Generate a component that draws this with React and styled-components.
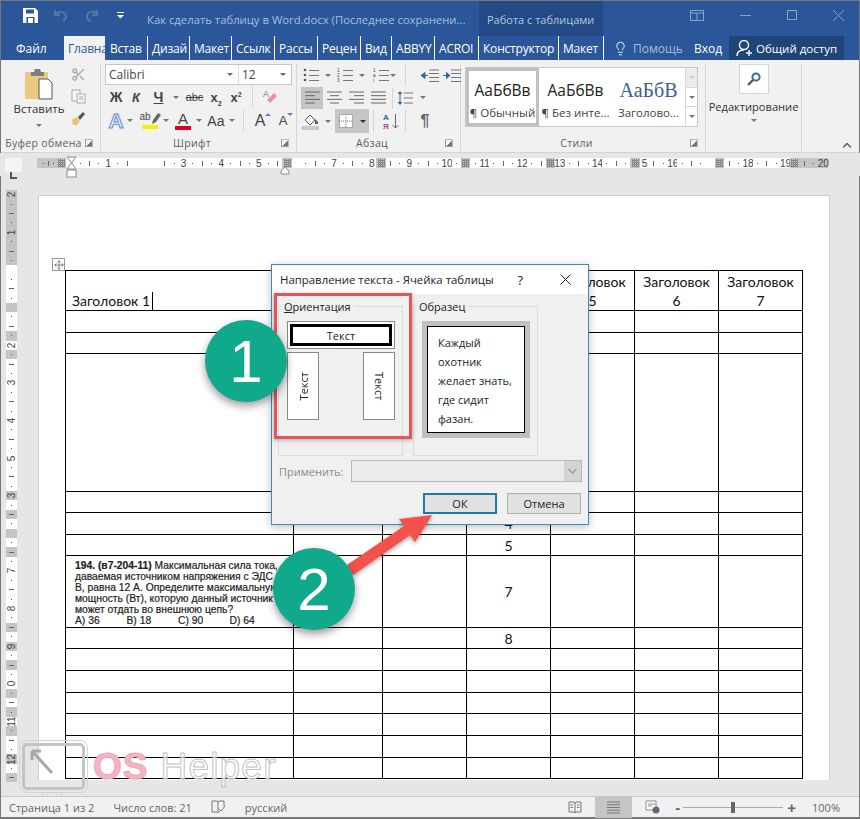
import React from "react";
import styled, { createGlobalStyle } from "styled-components";
import { Move, Scissors, Lightbulb } from "lucide-react";

const UI = `"Open Sans", "Noto Sans", sans-serif`;

const GlobalStyle = createGlobalStyle`
  html, body { margin: 0; padding: 0; background: #e6e6e6; }
  * { box-sizing: border-box; }
`;

const Word = styled.div`
  position: relative;
  width: 860px;
  height: 819px;
  overflow: hidden;
  display: flex;
  flex-direction: column;
  font-family: ${UI};
  background: #e6e6e6;
  outline: 1px solid #777;
  outline-offset: -1px;
`;

/* title bar */
const TitleBar = styled.div`
  height: 36px;
  display: flex;
  background: #2b579a;
  color: #fff;
`;
const Qat = styled.div`
  width: 147px;
  display: flex;
  align-items: center;
  padding: 0 0 6px 23px;
`;
const DocTitle = styled.div`
  width: 332px;
  padding-top: 12px;
  font-size: 11.3px;
  color: #a9bedb;
  white-space: nowrap;
`;
const ToolsTitle = styled.div`
  width: 124px;
  background: #234a85;
  padding: 12px 0 0 8px;
  font-size: 11px;
  color: #b6c8e2;
  white-space: nowrap;
`;
const WinButtons = styled.div`
  flex: 1;
  display: flex;
  align-items: center;
  justify-content: flex-end;
  padding: 0 16px 6px 0;
  gap: 36px;
  opacity: 0.45;
`;

/* tab row */
const TabRow = styled.div`
  height: 24px;
  display: flex;
  background: #2b579a;
  color: #fff;
  font-size: 12px;
`;
const FileTab = styled.div`
  width: 64px;
  padding: 4px 0 0 16px;
`;
const Tab = styled.div`
  width: ${(p) => p.$w}px;
  padding-left: 4px;
  padding-top: 4px;
  overflow: hidden;
  white-space: nowrap;
  letter-spacing: -0.2px;
  background: ${(p) => (p.$active ? "#f1f1f1" : "transparent")};
  color: ${(p) => (p.$active ? "#2b579a" : "#fff")};
  border-right: ${(p) => (p.$active ? "none" : "1px solid #fff")};
  margin: ${(p) => (p.$active ? "0 1px 0 0" : "0")};
`;
const HelpTab = styled.div`
  width: 85px;
  display: flex;
  align-items: center;
  gap: 5px;
  padding-left: 9px;
  color: #a9bedb;
  overflow: hidden;
  white-space: nowrap;
`;
const LoginTab = styled.div`
  width: 40px;
  padding: 4px 0 0 5px;
`;
const ShareTab = styled.div`
  width: 115px;
  display: flex;
  align-items: center;
  gap: 3px;
  padding-left: 7px;
  background: #1e4478;
  font-size: 11.5px;
  white-space: nowrap;
`;

/* ribbon */
const Ribbon = styled.div`
  height: 93px;
  display: flex;
  padding: 4px 0 1px;
  background: #f1f1f1;
  border-bottom: 1px solid #d4d4d4;
`;
const Group = styled.div`
  width: ${(p) => p.$w}px;
  display: flex;
  flex-direction: column;
  border-right: 1px solid #d6d6d6;
`;
const GroupBody = styled.div`
  flex: 1;
  display: flex;
  flex-direction: ${(p) => (p.$row ? "row" : "column")};
  padding-left: ${(p) => p.$pl || 0}px;
`;
const GroupFooter = styled.div`
  height: 17px;
  display: flex;
  align-items: center;
  padding: 0 7px 0 2px;
  font-size: 10.5px;
  letter-spacing: 0.3px;
  color: #5e5e5e;
  white-space: nowrap;
`;
const FooterLabel = styled.div`
  flex: 1;
  text-align: center;
`;
const Launcher = styled.div`
  width: 8px;
  height: 8px;
  border-left: 1px solid #999;
  border-bottom: 1px solid #999;
  border-top: 1px solid #bbb;
  border-right: 1px solid #bbb;
  background: linear-gradient(135deg, transparent 55%, #777 55%);
`;
const Collapse = styled.div`
  flex: 1;
  display: flex;
  align-items: flex-end;
  justify-content: flex-end;
  padding: 0 9px 3px 0;
`;
const PasteColumn = styled.div`
  width: 62px;
  margin-left: 8px;
  display: flex;
  flex-direction: column;
  align-items: center;
  font-size: 11.5px;
  color: #333;
  padding-top: 3px;
`;
const SmallColumn = styled.div`
  width: 16px;
  display: flex;
  flex-direction: column;
  align-items: center;
  gap: 7px;
  padding-top: 3px;
`;
const Caret = styled.span`
  display: inline-block;
  width: 0;
  height: 0;
  border-left: 3px solid transparent;
  border-right: 3px solid transparent;
  border-top: 3px solid ${(p) => p.$c || "#777"};
  margin-top: ${(p) => p.$mt || 0}px;
`;
const SizeMark = styled.span`
  width: 0;
  height: 0;
  align-self: flex-start;
  margin-top: 3px;
  border-left: 3px solid transparent;
  border-right: 3px solid transparent;
  border-top: ${(p) => (p.$up ? "none" : "3px solid #5f86b5")};
  border-bottom: ${(p) => (p.$up ? "3px solid #5f86b5" : "none")};
`;
const ComboRow = styled.div`
  height: 21px;
  display: flex;
  margin-left: 4px;
  width: 187px;
  background: #fff;
  border: 1px solid #c6c6c6;
  font-size: 12px;
  color: #444;
`;
const Combo = styled.div`
  width: ${(p) => p.$w}px;
  display: flex;
  align-items: center;
  justify-content: space-between;
  padding: 0 5px 0 3px;
  border-right: ${(p) => (p.$split ? "1px solid #ddd" : "none")};
`;
const ToolRow = styled.div`
  height: ${(p) => p.$h || 23}px;
  display: flex;
  align-items: center;
  padding-left: ${(p) => p.$pl || 0}px;
`;
const Tool = styled.div`
  width: ${(p) => p.$w}px;
  height: ${(p) => p.$h || 22}px;
  flex: none;
  display: flex;
  flex-direction: ${(p) => (p.$col ? "column" : "row")};
  align-items: center;
  justify-content: center;
  background: ${(p) => (p.$on ? "#c5c5c5" : "transparent")};
  color: #444;
`;
const Gap = styled.div`
  width: ${(p) => p.$w}px;
  flex: none;
`;
const Sep = styled.div`
  width: 1px;
  height: 22px;
  flex: none;
  margin: 0 ${(p) => p.$m}px;
  background: #d6d6d6;
`;
const Glyph = styled.span`
  font-family: ${(p) => p.$font || `"Liberation Sans", sans-serif`};
  font-size: ${(p) => p.$s || 14}px;
  font-weight: ${(p) => (p.$b ? 700 : 400)};
  font-style: ${(p) => (p.$i ? "italic" : "normal")};
  text-decoration: ${(p) => p.$d || "none"};
  color: ${(p) => p.$c || "#444"};
  line-height: 1;
  white-space: nowrap;
`;
const SubGlyph = styled.sub`
  font-size: 7px;
  line-height: 0;
`;
const SupGlyph = styled.sup`
  font-size: 7px;
  line-height: 0;
`;
const OutlineA = styled.span`
  font-family: "Liberation Sans", sans-serif;
  font-size: 21px;
  font-weight: 700;
  line-height: 1;
  color: #e4eefa;
  -webkit-text-stroke: 1px #5c90cb;
`;
const ColorBar = styled.div`
  width: ${(p) => p.$w}px;
  height: 4px;
  background: ${(p) => p.$c};
`;
const HighlightTop = styled.div`
  height: 13px;
  display: flex;
  align-items: flex-start;
`;

/* style gallery */
const Gallery = styled.div`
  width: 233px;
  height: 60px;
  margin: 3px 0 0 4px;
  display: flex;
  background: #fff;
  border: 1px solid #c6c6c6;
`;
const StyleItem = styled.div`
  width: 73px;
  display: flex;
  flex-direction: column;
  align-items: center;
  padding-top: ${(p) => (p.$on ? 7 : 10)}px;
  border: ${(p) => (p.$on ? "3px solid #c0c0c0" : "none")};
  white-space: nowrap;
  overflow: hidden;
`;
const StyleSample = styled.div`
  height: 27px;
  font-family: ${(p) => (p.$serif ? `"Liberation Serif", serif` : `"Open Sans", sans-serif`)};
  font-size: ${(p) => (p.$serif ? 20 : 15.5)}px;
  color: ${(p) => (p.$serif ? "#3c6191" : "#222")};
  line-height: 24px;
`;
const StyleName = styled.div`
  font-size: 11.5px;
  color: #444;
`;
const GalleryScroll = styled.div`
  flex: 1;
  display: flex;
  flex-direction: column;
  border-left: 1px solid #d8d8d8;
`;
const ScrollBtn = styled.div`
  flex: 1;
  display: flex;
  align-items: center;
  justify-content: center;
  background: ${(p) => (p.$off ? "#ececec" : "#fff")};
  border-bottom: 1px solid #d8d8d8;
  &:last-child {
    border-bottom: none;
  }
`;
const EditColumn = styled.div`
  flex: 1;
  display: flex;
  flex-direction: column;
  align-items: center;
  font-size: 11.1px;
  color: #333;
  gap: 5px;
`;
const EditButton = styled.div`
  width: 30px;
  height: 30px;
  display: flex;
  align-items: center;
  justify-content: center;
  background: #fff;
  border: 1px solid #d4d4d4;
`;

/* horizontal ruler */
const RulerRow = styled.div`
  position: relative;
  height: 23px;
  flex: none;
  display: flex;
  padding: 5px 0 0 5px;
  background: #e6e6e6;
`;
const TabStop = styled.div`
  width: 17px;
  height: 14px;
  margin: 0 15px 0 0;
  padding: 4px 0 0 5px;
  background: #f5f5f5;
`;
const RulerTrack = styled.div`
  height: 10px;
  display: flex;
`;
const RulerLead = styled.div`
  width: 29px;
  display: flex;
  align-items: center;
  justify-content: flex-end;
  gap: 4px;
  padding-right: 1px;
  background: #c4c4c4;
`;
const RulerCell = styled.div`
  width: 9.42px;
  flex: none;
  display: flex;
  align-items: center;
  justify-content: center;
  font-family: "Liberation Sans", sans-serif;
  font-size: 10px;
  color: #444;
  background: ${(p) => (p.$gray ? "#c4c4c4" : "#fff")};
  white-space: nowrap;
`;
const Dot = styled.span`
  width: 1px;
  height: 1px;
  flex: none;
  background: #555;
`;
const Bar = styled.span`
  width: 1px;
  height: 5px;
  flex: none;
  background: #666;
`;
const ColMark = styled.span`
  width: 7px;
  height: 8px;
  flex: none;
  background: repeating-linear-gradient(0deg, #888 0 1px, transparent 1px 2px),
    repeating-linear-gradient(90deg, #888 0 1px, transparent 1px 2px);
`;
const IndentMark = styled.div`
  position: absolute;
  left: ${(p) => p.$x}px;
  top: ${(p) => p.$y}px;
  line-height: 0;
`;

/* document */
const Workspace = styled.div`
  flex: 1;
  display: flex;
  align-items: flex-start;
  padding: 14px 0 0 6px;
  background: #e6e6e6;
`;
const VRuler = styled.div`
  width: 11px;
  height: 592px;
  flex: none;
  display: flex;
  flex-direction: column;
  overflow: hidden;
`;
const VCell = styled.div`
  height: 9.42px;
  flex: none;
  display: flex;
  align-items: center;
  justify-content: center;
  font-family: "Liberation Sans", sans-serif;
  font-size: 10px;
  color: #444;
  background: ${(p) => (p.$gray ? "#c4c4c4" : "#fff")};
`;
const VNum = styled.span`
  transform: rotate(-90deg);
`;
const VDash = styled.span`
  width: 5px;
  height: 1px;
  background: #666;
`;
const Page = styled.div`
  position: relative;
  width: 792px;
  height: 585px;
  margin: 5px 0 0 21px;
  padding: 74px 0 0 26px;
  background: #fff;
  border: 1px solid #d0d0d0;
  border-bottom: none;
`;
const MoveHandle = styled.div`
  position: absolute;
  left: 13px;
  top: 62px;
  width: 13px;
  height: 13px;
  display: flex;
  align-items: center;
  justify-content: center;
  border: 1px solid #999;
  background: #fff;
`;
const Table = styled.table`
  width: 738px;
  table-layout: fixed;
  border-collapse: collapse;
  font-family: "Lato", "Open Sans", sans-serif;
  font-size: 14px;
  color: #111;
`;
const Tr = styled.tr`
  height: ${(p) => p.$h}px;
`;
const Td = styled.td`
  padding: ${(p) => (p.$left ? "0 0 0 6px" : p.$head ? "0 8px" : "0")};
  border: 1px solid #000;
  text-align: ${(p) => (p.$left ? "left" : "center")};
  vertical-align: ${(p) => (p.$head ? "bottom" : "middle")};
  line-height: 19px;
  overflow: hidden;
`;
const TextCaret = styled.span`
  display: inline-block;
  width: 1px;
  height: 18px;
  margin-left: 2px;
  vertical-align: -4px;
  background: #000;
`;
const Problem = styled.div`
  font-family: "Liberation Sans", sans-serif;
  font-size: 10.3px;
  line-height: 11px;
  padding: 2px 0 0 3px;
  color: #222;
  white-space: nowrap;
  -webkit-text-stroke: 0.2px #222;
`;
const Answers = styled.div`
  display: flex;
`;
const Answer = styled.span`
  width: 51.5px;
`;

/* status bar */
const StatusBar = styled.div`
  height: 23px;
  flex: none;
  display: flex;
  align-items: center;
  padding: 0 20px 0 9px;
  background: #f1f1f1;
  border-top: 1px solid #c8c8c8;
  border-bottom: 2px solid #777;
  font-size: 11px;
  color: #666;
  white-space: nowrap;
`;
const StatusText = styled.span`
  margin-right: ${(p) => p.$mr}px;
`;
const StatusRight = styled.div`
  margin-left: auto;
  height: 100%;
  display: flex;
  align-items: center;
`;
const ZoomTrack = styled.div`
  width: 100px;
  margin: 0 4px 0 3px;
  display: flex;
  align-items: center;
`;
const ZoomLine = styled.div`
  flex: 1;
  height: 1px;
  background: #aaa;
`;
const ZoomThumb = styled.div`
  width: 4px;
  height: 11px;
  background: #666;
`;
const ZoomSign = styled.span`
  font-family: "Liberation Sans", sans-serif;
  font-size: 15px;
  font-weight: 700;
  color: #666;
`;
const ZoomValue = styled.span`
  margin-left: 16px;
`;

/* dialog */
const Dialog = styled.div`
  position: absolute;
  left: 271px;
  top: 264px;
  width: 318px;
  height: 261px;
  display: flex;
  flex-direction: column;
  background: #f0f0f0;
  border: 1px solid #3f8cc4;
  box-shadow: 0 2px 9px rgba(0, 0, 0, 0.25);
  font-size: 11px;
  color: #222;
`;
const DialogTitle = styled.div`
  height: 29px;
  flex: none;
  display: flex;
  align-items: center;
  padding: 0 17px 0 8px;
  background: #fff;
  font-size: 11.4px;
  white-space: nowrap;
`;
const DialogHelp = styled.span`
  margin: 0 37px 0 auto;
  font-size: 13px;
`;
const Panels = styled.div`
  display: flex;
  gap: 10px;
  padding: 5px 0 0 6px;
`;
const Panel = styled.fieldset`
  width: 125px;
  height: 157px;
  margin: 0;
  padding: 7px 0 0 8px;
  border: 1px solid #dcdcdc;
`;
const PanelTitle = styled.legend`
  margin-left: -6px;
  padding: 0 3px;
  font-size: 11px;
  line-height: 15px;
`;
const DirButton = styled.div`
  width: 108px;
  height: 28px;
  padding: 2px;
  background: #fff;
  border: 1px solid #888;
`;
const DirInner = styled.div`
  height: 100%;
  display: flex;
  align-items: center;
  justify-content: center;
  border: 3px solid #000;
`;
const DirColumns = styled.div`
  width: 108px;
  margin-top: 3px;
  display: flex;
  justify-content: space-between;
`;
const DirTall = styled.div`
  width: 32px;
  height: 68px;
  display: flex;
  align-items: center;
  justify-content: center;
  background: #fff;
  border: 1px solid #888;
`;
const VerticalText = styled.span`
  writing-mode: vertical-rl;
  transform: ${(p) => (p.$up ? "rotate(180deg)" : "none")};
`;
const SampleFrame = styled.div`
  width: 108px;
  height: 117px;
  padding: 5px;
  background: #c0c0c0;
`;
const SampleBox = styled.div`
  height: 100%;
  padding: 6px 0 0 10px;
  background: #fff;
  border: 1px solid #000;
  line-height: 19px;
  white-space: nowrap;
`;
const ApplyRow = styled.div`
  display: flex;
  align-items: center;
  margin: 4px 0 0 7px;
  color: #888;
`;
const ApplySelect = styled.div`
  width: 231px;
  height: 22px;
  margin-left: 7px;
  display: flex;
  justify-content: flex-end;
  background: #ebebeb;
  border: 1px solid #b8b8b8;
`;
const ApplyArrow = styled.div`
  width: 17px;
  display: flex;
  align-items: center;
  justify-content: center;
  background: #d4d4d4;
`;
const ButtonRow = styled.div`
  display: flex;
  gap: 10px;
  margin: 11px 7px 0 auto;
`;
const DialogButton = styled.div`
  width: 74px;
  height: 21px;
  display: flex;
  align-items: center;
  justify-content: center;
  background: #e1e1e1;
  border: ${(p) => (p.$primary ? "2px solid #1f78b4" : "1px solid #adadad")};
`;

/* annotations over the shot */
const RedFrame = styled.div`
  position: absolute;
  left: 274px;
  top: 293px;
  width: 138px;
  height: 146px;
  border: 3px solid #e2555b;
  box-shadow: 0 1px 4px rgba(0, 0, 0, 0.3);
`;
const Badge = styled.div`
  position: absolute;
  left: ${(p) => p.$x}px;
  top: ${(p) => p.$y}px;
  width: 82px;
  height: 82px;
  display: flex;
  align-items: center;
  justify-content: center;
  border-radius: 50%;
  background: #10a98b;
  box-shadow: 0 4px 8px rgba(0, 0, 0, 0.4);
  color: #fff;
  font-family: "Liberation Sans", sans-serif;
  font-size: 60px;
`;
const ArrowLayer = styled.svg`
  position: absolute;
  left: 0;
  top: 0;
  pointer-events: none;
`;
const Watermark = styled.div`
  position: absolute;
  left: 22px;
  top: 743px;
  display: flex;
  align-items: center;
`;
const MarkBox = styled.div`
  position: relative;
  width: 63px;
  height: 47px;
  margin-right: 8px;
  padding: 3px 0 0 5px;
  border: 3px solid #c4c4c4;
  border-radius: 5px;
  outline: 1px solid #d4d4d4;
  outline-offset: 2px;
`;
const MarkFoot = styled.div`
  position: absolute;
  left: 17px;
  bottom: -10px;
  width: 20px;
  height: 5px;
  border: 1px solid #d0d0d0;
  border-bottom: none;
`;
const MarkOs = styled.span`
  font-family: "Liberation Sans", sans-serif;
  font-size: 37px;
  font-weight: 700;
  line-height: 1;
  letter-spacing: 1px;
  color: #f3b4c3;
  -webkit-text-stroke: 1px #f0a6b8;
`;
const MarkHelper = styled.span`
  margin-left: 12px;
  font-family: "Liberation Sans", sans-serif;
  font-size: 37px;
  line-height: 1;
  letter-spacing: 1.2px;
  color: rgba(255, 255, 255, 0.6);
  -webkit-text-stroke: 1px #c2c2c2;
`;

/* small drawings */
const Lines = ({ rows, w = 15, x = 0, c = "#666" }) => (
  <svg width={w} height={13} viewBox={`0 0 ${w} 13`}>
    {rows.map(([a, b], i) => (
      <rect key={i} x={a + x} y={1 + i * (11 / (rows.length - 1)) - 0.5} width={b - a} height={1} fill={c} />
    ))}
  </svg>
);

const ListIcon = ({ marks }) => (
  <svg width="16" height="14" viewBox="0 0 16 14">
    {[2, 7, 12].map((y, i) => (
      <g key={y}>
        {marks ? (
          <text x="0" y={y + 1.5} fontSize="4.6" fontFamily="Liberation Sans" fill="#444">{marks[i]}</text>
        ) : (
          <circle cx="2" cy={y} r="1.3" fill="#557" />
        )}
        <rect x="6" y={y} width="10" height="1" fill="#777" />
      </g>
    ))}
  </svg>
);

const IndentIcon = ({ flip }) => (
  <svg width="18" height="13" viewBox="0 0 18 13">
    {[0.5, 4, 8, 12].map((y) => (
      <rect key={y} x="8" y={y} width="10" height="1" fill="#777" />
    ))}
    <path d={flip ? "M0 6.5h5M3.5 3.5L7 6.5 3.5 9.5z" : "M7 6.5H2M4 3.5L0 6.5 4 9.5z"} stroke="#2b6cb0" fill="#2b6cb0" />
  </svg>
);

const PasteIcon = () => (
  <svg width="30" height="34" viewBox="0 0 30 34">
    <rect x="1" y="5" width="23" height="27" rx="1" fill="#ebc983" />
    <path d="M7 5h3l1-3h5l1 3h3v4H7z" fill="#7d7d7d" />
    <path d="M15 12h9l4 4v16H15z" fill="#fff" stroke="#555" />
  </svg>
);

const CopyIcon = () => (
  <svg width="15" height="15" viewBox="0 0 15 15" fill="#f6f6f6" stroke="#aaa">
    <rect x="1" y="1" width="8" height="11" />
    <rect x="6" y="5" width="8" height="9" />
    <path d="M8 8h4M8 10h4" />
  </svg>
);

const BrushIcon = () => (
  <svg width="16" height="16" viewBox="0 0 16 16">
    <path d="M1 9l6-3 3 4-4 5-2-2-1 1-1-2 1-1z" fill="#e7c37c" />
    <path d="M8 6l5-5 2 2-5 6z" fill="#555" />
  </svg>
);

const FindIcon = () => (
  <svg width="14" height="14" viewBox="0 0 14 14" fill="none" stroke="#3a6ea5" strokeWidth="2">
    <circle cx="9" cy="5" r="3.6" />
    <path d="M6 8l-5 5" strokeWidth="2.4" stroke="#555" />
  </svg>
);

const MarkerPen = () => (
  <svg width="10" height="13" viewBox="0 0 10 13">
    <path d="M1 12l1-4 5-7 3 2-5 7z" fill="#666" />
  </svg>
);

const Hourglass = () => (
  <svg width="11" height="22" viewBox="0 0 11 22" fill="#fff" stroke="#8a8a8a">
    <path d="M1 1h9L5.5 7zM5.5 7L1 13h9z" />
    <rect x="1" y="14" width="9" height="7" />
  </svg>
);

const Pentagon = () => (
  <svg width="10" height="9" viewBox="0 0 10 9" fill="#fff" stroke="#8a8a8a">
    <path d="M5 1l4 4v3H1V5z" />
  </svg>
);

const rulerNumbers = { 4: "1", 12: "3", 16: "4", 20: "5", 28: "7", 32: "8", 36: "9", 40: "10", 44: "11", 48: "12", 52: "13", 56: "14", 64: "16", 72: "18", 76: "19", 80: "20" };
const rulerMarks = [23, 33, 42, 51, 60, 69, 77];
const rulerBlank = [7, 8, 9];

const rulerCell = (i) => {
  const gray = i >= 77;
  if (rulerMarks.includes(i)) return <RulerCell key={i} $gray><ColMark /></RulerCell>;
  if (i === 61) return <RulerCell key={i}>5</RulerCell>;
  if (rulerBlank.includes(i)) return <RulerCell key={i} />;
  if (rulerNumbers[i]) return <RulerCell key={i} $gray={gray}>{rulerNumbers[i]}</RulerCell>;
  if (i % 4 === 2) return <RulerCell key={i} $gray={gray}><Bar /></RulerCell>;
  return <RulerCell key={i} $gray={gray}>{i % 2 === 1 ? <Dot /> : null}</RulerCell>;
};

const vNumbers = { "-8": "2", "-4": "1", 8: "2", 12: "3", 16: "4", 20: "5", 24: "3", 32: "7", 36: "8", 40: "9", 44: "0", 48: "11", 52: "12", 56: "1" };
const vMarks = [4, 7, 9, 24, 26, 28, 30, 38, 40, 42, 45, 47, 49, 52, 54];

const vCell = (i) => {
  const gray = i < 0 || vMarks.includes(i);
  const label = vNumbers[i];
  return (
    <VCell key={i} $gray={gray}>
      {label ? <VNum>{label}</VNum> : Math.abs(i) % 4 === 2 ? <VDash /> : Math.abs(i) % 2 === 1 ? <Dot /> : null}
    </VCell>
  );
};

const rows = [
  { h: 22 }, { h: 21 }, { h: 138 }, { h: 21 }, { h: 22, n: "4" }, { h: 21, n: "5" },
  { h: 72, n: "7", problem: true }, { h: 21, n: "8" }, { h: 22 }, { h: 22 }, { h: 21 },
  { h: 22 }, { h: 22 }, { h: 21 },
];

const tabs = [
  ["Встав", 42], ["Дизай", 42], ["Макет", 42], ["Ссылк", 43], ["Рассы", 43], ["Рецен", 43],
  ["Вид", 31], ["ABBYY", 43], ["ACROI", 44], ["Конструктор", 80], ["Макет", 45],
];

const App = () => {
  return (
    <Word>
      <GlobalStyle />
      <TitleBar>
        <Qat>
          <svg width="15" height="15" viewBox="0 0 15 15">
            <path d="M0 0h12l3 3v12H0z" fill="#fff" />
            <rect x="3" y="1.5" width="8" height="4" fill="#2b579a" />
            <rect x="3.5" y="9" width="8" height="6" fill="#2b579a" />
            <rect x="5" y="10" width="5" height="5" fill="#fff" />
          </svg>
          <Gap $w={14} />
          <svg width="22" height="14" viewBox="0 0 22 14" fill="none" stroke="#54789f" strokeWidth="2">
            <path d="M3 2v5h5M3 7c3-4 10-4 11 1 0 2-1 4-3 5" />
          </svg>
          <Gap $w={10} />
          <svg width="16" height="15" viewBox="0 0 16 15" fill="none" stroke="#54789f" strokeWidth="2">
            <path d="M13 2v5H8M13 7c-2-5-10-4-10 2 0 2 2 4 4 4" />
          </svg>
          <Gap $w={17} />
          <svg width="7" height="7" viewBox="0 0 7 7" fill="#fff">
            <rect y="0" width="7" height="1" />
            <path d="M0 3h7L3.5 6.5z" />
          </svg>
        </Qat>
        <DocTitle>Как сделать таблицу в Word.docx (Последнее сохранени...</DocTitle>
        <ToolsTitle>Работа с таблицами</ToolsTitle>
        <WinButtons>
          <svg width="14" height="11" viewBox="0 0 14 11" fill="none" stroke="#fff"><rect x="0.5" y="0.5" width="13" height="10" /><path d="M0 3h14M7 3v8" /></svg>
          <svg width="11" height="1" viewBox="0 0 11 1"><rect width="11" height="1" fill="#fff" /></svg>
          <svg width="10" height="10" viewBox="0 0 10 10" fill="none" stroke="#fff"><rect x="0.5" y="0.5" width="9" height="9" /></svg>
          <svg width="11" height="11" viewBox="0 0 11 11" stroke="#fff"><path d="M0 0l11 11M11 0L0 11" /></svg>
        </WinButtons>
      </TitleBar>

      <TabRow>
        <FileTab>Файл</FileTab>
        <Tab $w={41} $active>Главная</Tab>
        {tabs.map(([t, w], i) => (
          <Tab key={i} $w={w}>{t}</Tab>
        ))}
        <HelpTab><Lightbulb size={15} strokeWidth={1.4} color="#fff" />Помощь</HelpTab>
        <LoginTab>Вход</LoginTab>
        <ShareTab>
          <svg width="17" height="18" viewBox="0 0 17 18" fill="none" stroke="#fff" strokeWidth="1.4">
            <circle cx="8" cy="6" r="4.5" />
            <path d="M1 17c0-4 3-6 7-6M10 14h6M13 11v6" />
          </svg>
          Общий доступ
        </ShareTab>
      </TabRow>

      <Ribbon>
        <Group $w={101}>
          <GroupBody $row>
            <PasteColumn>
              <PasteIcon />
              <Gap $w={1} />
              <span>Вставить</span>
              <Caret $mt={8} />
            </PasteColumn>
            <SmallColumn>
              <Scissors size={15} color="#a5a5a5" />
              <CopyIcon />
              <BrushIcon />
            </SmallColumn>
          </GroupBody>
          <GroupFooter>
            <FooterLabel>Буфер обмена</FooterLabel>
            <Launcher />
          </GroupFooter>
        </Group>

        <Group $w={196}>
          <GroupBody>
            <ComboRow>
              <Combo $w={133} $split>Calibri<Caret $c="#666" /></Combo>
              <Combo $w={52}>12<Caret $c="#666" /></Combo>
            </ComboRow>
            <ToolRow $pl={6} $h={24}>
              <Tool $w={18}><Glyph $b $s={14}>Ж</Glyph></Tool>
              <Tool $w={22}><Glyph $b $i $s={13}>К</Glyph></Tool>
              <Tool $w={23}><Glyph $b $d="underline" $s={14}>Ч</Glyph></Tool>
              <Tool $w={12}><Caret /></Tool>
              <Tool $w={25}><Glyph $s={11} $d="line-through">abc</Glyph></Tool>
              <Tool $w={18}><Glyph $b $s={13}>x<SubGlyph>2</SubGlyph></Glyph></Tool>
              <Tool $w={22}><Glyph $b $s={13}>x<SupGlyph>2</SupGlyph></Glyph></Tool>
              <Sep $m={5} />
              <Tool $w={24}>
                <svg width="17" height="16" viewBox="0 0 17 16">
                  <path d="M8 14l7-7-3-3-7 7z" fill="#ef8f9d" />
                  <text x="1" y="8" fontSize="9" fontFamily="Liberation Sans" fill="#777">A</text>
                </svg>
              </Tool>
            </ToolRow>
            <ToolRow $pl={6}>
              <Tool $w={18}><OutlineA>A</OutlineA></Tool>
              <Tool $w={10}><Caret /></Tool>
              <Gap $w={4} />
              <Tool $w={22} $col>
                <HighlightTop>
                  <Glyph $s={10}>ab</Glyph>
                  <MarkerPen />
                </HighlightTop>
                <ColorBar $w={16} $c="#f4f000" />
              </Tool>
              <Tool $w={10}><Caret /></Tool>
              <Gap $w={1} />
              <Tool $w={22} $col>
                <Glyph $s={15}>A</Glyph>
                <ColorBar $w={16} $c="#e3001b" />
              </Tool>
              <Tool $w={10}><Caret /></Tool>
              <Gap $w={1} />
              <Tool $w={22}><Glyph $s={14}>Аа</Glyph></Tool>
              <Tool $w={9}><Caret /></Tool>
              <Sep $m={7} />
              <Gap $w={2} />
              <Tool $w={20}><Glyph $s={16}>A</Glyph><SizeMark $up /></Tool>
              <Gap $w={3} />
              <Tool $w={20}><Glyph $s={13}>A</Glyph><SizeMark /></Tool>
            </ToolRow>
          </GroupBody>
          <GroupFooter>
            <FooterLabel>Шрифт</FooterLabel>
            <Launcher />
          </GroupFooter>
        </Group>

        <Group $w={164}>
          <GroupBody>
            <ToolRow $pl={5} $h={22}>
              <Tool $w={18}><ListIcon /></Tool>
              <Gap $w={2} />
              <Tool $w={12}><Caret /></Tool>
              <Gap $w={2} />
              <Tool $w={18}><ListIcon marks={["1", "2", "3"]} /></Tool>
              <Gap $w={2} />
              <Tool $w={12}><Caret /></Tool>
              <Gap $w={5} />
              <Tool $w={16}><ListIcon marks={["1", "a", "i"]} /></Tool>
              <Tool $w={8}><Caret /></Tool>
              <Sep $m={8} />
              <Gap $w={7} />
              <Tool $w={18}><IndentIcon /></Tool>
              <Gap $w={4} />
              <Tool $w={18}><IndentIcon flip /></Tool>
            </ToolRow>
            <ToolRow $pl={4} $h={23}>
              <Tool $w={22} $on><Lines rows={[[0, 15], [0, 10], [0, 15], [0, 10]]} /></Tool>
              <Tool $w={22}><Lines rows={[[0, 15], [3, 12], [0, 15], [3, 12]]} /></Tool>
              <Tool $w={22}><Lines rows={[[0, 15], [5, 15], [0, 15], [5, 15]]} /></Tool>
              <Tool $w={22}><Lines rows={[[0, 15], [0, 15], [0, 15], [0, 15]]} /></Tool>
              <Sep $m={3} />
              <Tool $w={18}>
                <svg width="16" height="16" viewBox="0 0 16 16">
                  <path d="M3 1L.5 4h5zM3 15L.5 12h5z" fill="#2b6cb0" />
                  <path d="M3 4v8" stroke="#2b6cb0" />
                  <path d="M7 3h9M7 8h9M7 13h9" stroke="#777" />
                </svg>
              </Tool>
              <Gap $w={4} />
              <Tool $w={10}><Caret /></Tool>
            </ToolRow>
            <ToolRow $pl={5} $h={24}>
              <Tool $w={18}>
                <svg width="18" height="17" viewBox="0 0 18 17">
                  <path d="M3 7l5-5 5 5-5 5z" fill="#fff" stroke="#555" />
                  <path d="M13 6l3 3v2h-3z" fill="#556" />
                  <rect x="0" y="14" width="16" height="2" fill="#fff" stroke="#888" strokeWidth="0.8" />
                </svg>
              </Tool>
              <Gap $w={2} />
              <Tool $w={12}><Caret /></Tool>
              <Gap $w={1} />
              <Tool $w={22} $h={24} $on>
                <svg width="14" height="14" viewBox="0 0 14 14" fill="#fff" stroke="#777" strokeDasharray="1 1">
                  <rect x="0.5" y="0.5" width="13" height="13" />
                  <path d="M0 7h14M7 0v14" />
                </svg>
              </Tool>
              <Tool $w={12} $h={24} $on><Caret $c="#333" /></Tool>
              <Sep $m={4} />
              <Gap $w={4} />
              <Tool $w={18}>
                <svg width="17" height="18" viewBox="0 0 17 18">
                  <text x="0" y="8" fontSize="8" fontWeight="700" fontFamily="Liberation Sans" fill="#2b6cb0">А</text>
                  <text x="0" y="17" fontSize="8" fontWeight="700" fontFamily="Liberation Sans" fill="#b04a7a">Я</text>
                  <path d="M12.5 2v14M9.5 13l3 3 3-3" stroke="#666" fill="none" />
                </svg>
              </Tool>
              <Sep $m={5} />
              <Gap $w={5} />
              <Tool $w={18}><Glyph $s={16} $b $c="#666">¶</Glyph></Tool>
            </ToolRow>
          </GroupBody>
          <GroupFooter>
            <FooterLabel>Абзац</FooterLabel>
            <Launcher />
          </GroupFooter>
        </Group>

        <Group $w={245}>
          <GroupBody>
            <Gallery>
              <StyleItem $on>
                <StyleSample>АаБбВв</StyleSample>
                <StyleName>¶ Обычный</StyleName>
              </StyleItem>
              <StyleItem>
                <StyleSample>АаБбВв</StyleSample>
                <StyleName>¶ Без инте...</StyleName>
              </StyleItem>
              <StyleItem>
                <StyleSample $serif>АаБбВ</StyleSample>
                <StyleName>Заголово...</StyleName>
              </StyleItem>
              <GalleryScroll>
                <ScrollBtn $off><Caret $c="#ccc" /></ScrollBtn>
                <ScrollBtn><Caret /></ScrollBtn>
                <ScrollBtn><Caret /></ScrollBtn>
              </GalleryScroll>
            </Gallery>
          </GroupBody>
          <GroupFooter>
            <FooterLabel>Стили</FooterLabel>
            <Launcher />
          </GroupFooter>
        </Group>

        <Group $w={96}>
          <EditColumn>
            <EditButton><FindIcon /></EditButton>
            <span>Редактирование</span>
            <Caret />
          </EditColumn>
        </Group>
        <Collapse>
          <svg width="8" height="5" viewBox="0 0 8 5" fill="none" stroke="#555" strokeWidth="1.4"><path d="M0 4.5l4-4 4 4" /></svg>
        </Collapse>
      </Ribbon>

      <RulerRow>
        <TabStop>
          <svg width="7" height="7" viewBox="0 0 7 7" fill="#555"><path d="M0 0h2v5h5v2H0z" /></svg>
        </TabStop>
        <RulerTrack>
          <RulerLead><Dot /><Bar /><Dot /><ColMark /></RulerLead>
          {Array.from({ length: 81 }, (_, i) => rulerCell(i))}
        </RulerTrack>
        <IndentMark $x={66} $y={3}><Hourglass /></IndentMark>
        <IndentMark $x={280} $y={13}><Pentagon /></IndentMark>
      </RulerRow>

      <Workspace>
        <VRuler>{Array.from({ length: 63 }, (_, i) => vCell(i - 8))}</VRuler>
        <Page>
          <MoveHandle><Move size={10} color="#444" strokeWidth={1.5} /></MoveHandle>
          <Table>
            <colgroup>
              {[228, 89, 84, 84, 84, 84, 84].map((w, i) => (
                <col key={i} width={w} />
              ))}
            </colgroup>
            <tbody>
              <Tr $h={40}>
                <Td $head $left>Заголовок 1<TextCaret /></Td>
                <Td $head />
                <Td $head />
                <Td $head />
                {[5, 6, 7].map((n) => (
                  <Td key={n} $head>Заголовок {n}</Td>
                ))}
              </Tr>
              {rows.map((r, i) => (
                <Tr key={i} $h={r.h}>
                  <Td $left>
                    {r.problem && (
                      <Problem>
                        <div><b>194. (в7-204-11)</b> Максимальная сила тока,</div>
                        <div>даваемая источником напряжения с ЭДС 1</div>
                        <div>В, равна 12 А. Определите максимальную</div>
                        <div>мощность (Вт), которую данный источник</div>
                        <div>может отдать во внешнюю цепь?</div>
                        <Answers>
                          <Answer>A) 36</Answer>
                          <Answer>B) 18</Answer>
                          <Answer>C) 90</Answer>
                          <Answer>D) 64</Answer>
                        </Answers>
                      </Problem>
                    )}
                  </Td>
                  <Td />
                  <Td />
                  <Td>{r.n}</Td>
                  <Td />
                  <Td />
                  <Td />
                </Tr>
              ))}
            </tbody>
          </Table>
        </Page>
      </Workspace>

      <StatusBar>
        <StatusText $mr={19}>Страница 1 из 2</StatusText>
        <StatusText $mr={19}>Число слов: 21</StatusText>
        <svg width="15" height="14" viewBox="0 0 15 14" fill="none" stroke="#777">
          <path d="M1 1h5l1 1v11l-1-1H1zM7 2l1-1h5v5M8 12h1" />
          <path d="M8 9l2 2 4-5" />
        </svg>
        <Gap $w={19} />
        <StatusText $mr={0}>русский</StatusText>
        <StatusRight>
          <Tool $w={20}>
            <svg width="14" height="13" viewBox="0 0 14 13" fill="none" stroke="#777">
              <path d="M1 1h5l1 1 1-1h5v10H8l-1 1-1-1H1zM7 2v10M2.5 4H5M2.5 6.5H5M9 4h2.5M9 6.5h2.5" />
            </svg>
          </Tool>
          <Gap $w={10} />
          <Tool $w={37} $h={21} $on><Lines rows={[[0, 13], [0, 13], [0, 13], [0, 13], [0, 13]]} w={13} c="#777" /></Tool>
          <Gap $w={10} />
          <Tool $w={20}>
            <svg width="15" height="14" viewBox="0 0 15 14">
              <path d="M1 1h10v9H1z" fill="#fff" stroke="#888" />
              <path d="M3 4h7M3 6h4" stroke="#888" />
              <circle cx="11" cy="10" r="3.5" fill="#667" />
            </svg>
          </Tool>
          <Gap $w={13} />
          <ZoomSign>-</ZoomSign>
          <ZoomTrack>
            <ZoomLine />
            <ZoomThumb />
            <ZoomLine />
          </ZoomTrack>
          <ZoomSign>+</ZoomSign>
          <ZoomValue>100%</ZoomValue>
        </StatusRight>
      </StatusBar>

      <Watermark>
        <MarkBox>
          <svg width="26" height="26" viewBox="0 0 26 26" fill="none" stroke="#a8a8a8" strokeWidth="3">
            <path d="M2 2l20 22M2 2v9M2 2h9" />
          </svg>
          <MarkFoot />
        </MarkBox>
        <MarkOs>OS</MarkOs>
        <MarkHelper>Helper</MarkHelper>
      </Watermark>

      <Dialog>
        <DialogTitle>
          Направление текста - Ячейка таблицы
          <DialogHelp>?</DialogHelp>
          <svg width="11" height="11" viewBox="0 0 11 11" stroke="#222"><path d="M0.5 0.5l10 10M10.5 0.5l-10 10" /></svg>
        </DialogTitle>
        <Panels>
          <Panel>
            <PanelTitle><u>О</u>риентация</PanelTitle>
            <DirButton><DirInner>Текст</DirInner></DirButton>
            <DirColumns>
              <DirTall><VerticalText $up>Текст</VerticalText></DirTall>
              <DirTall><VerticalText>Текст</VerticalText></DirTall>
            </DirColumns>
          </Panel>
          <Panel>
            <PanelTitle>Образец</PanelTitle>
            <SampleFrame>
              <SampleBox>
                Каждый<br />охотник<br />желает знать,<br />где сидит<br />фазан.
              </SampleBox>
            </SampleFrame>
          </Panel>
        </Panels>
        <ApplyRow>
          Применить:
          <ApplySelect>
            <ApplyArrow>
              <svg width="9" height="6" viewBox="0 0 9 6" fill="none" stroke="#999" strokeWidth="1.3"><path d="M0.5 1l4 4 4-4" /></svg>
            </ApplyArrow>
          </ApplySelect>
        </ApplyRow>
        <ButtonRow>
          <DialogButton $primary>ОК</DialogButton>
          <DialogButton>Отмена</DialogButton>
        </ButtonRow>
      </Dialog>

      <RedFrame />
      <ArrowLayer width="860" height="819" viewBox="0 0 860 819">
        <polygon
          points="347,565 404,526 399,519 432,515 415,542 410,535 353,575"
          fill="#f4504c"
          style={{ filter: "drop-shadow(0 2px 2px rgba(0,0,0,0.35))" }}
        />
      </ArrowLayer>
      <Badge $x={205} $y={320}>1</Badge>
      <Badge $x={273} $y={548}>2</Badge>
    </Word>
  );
};

export default App;
